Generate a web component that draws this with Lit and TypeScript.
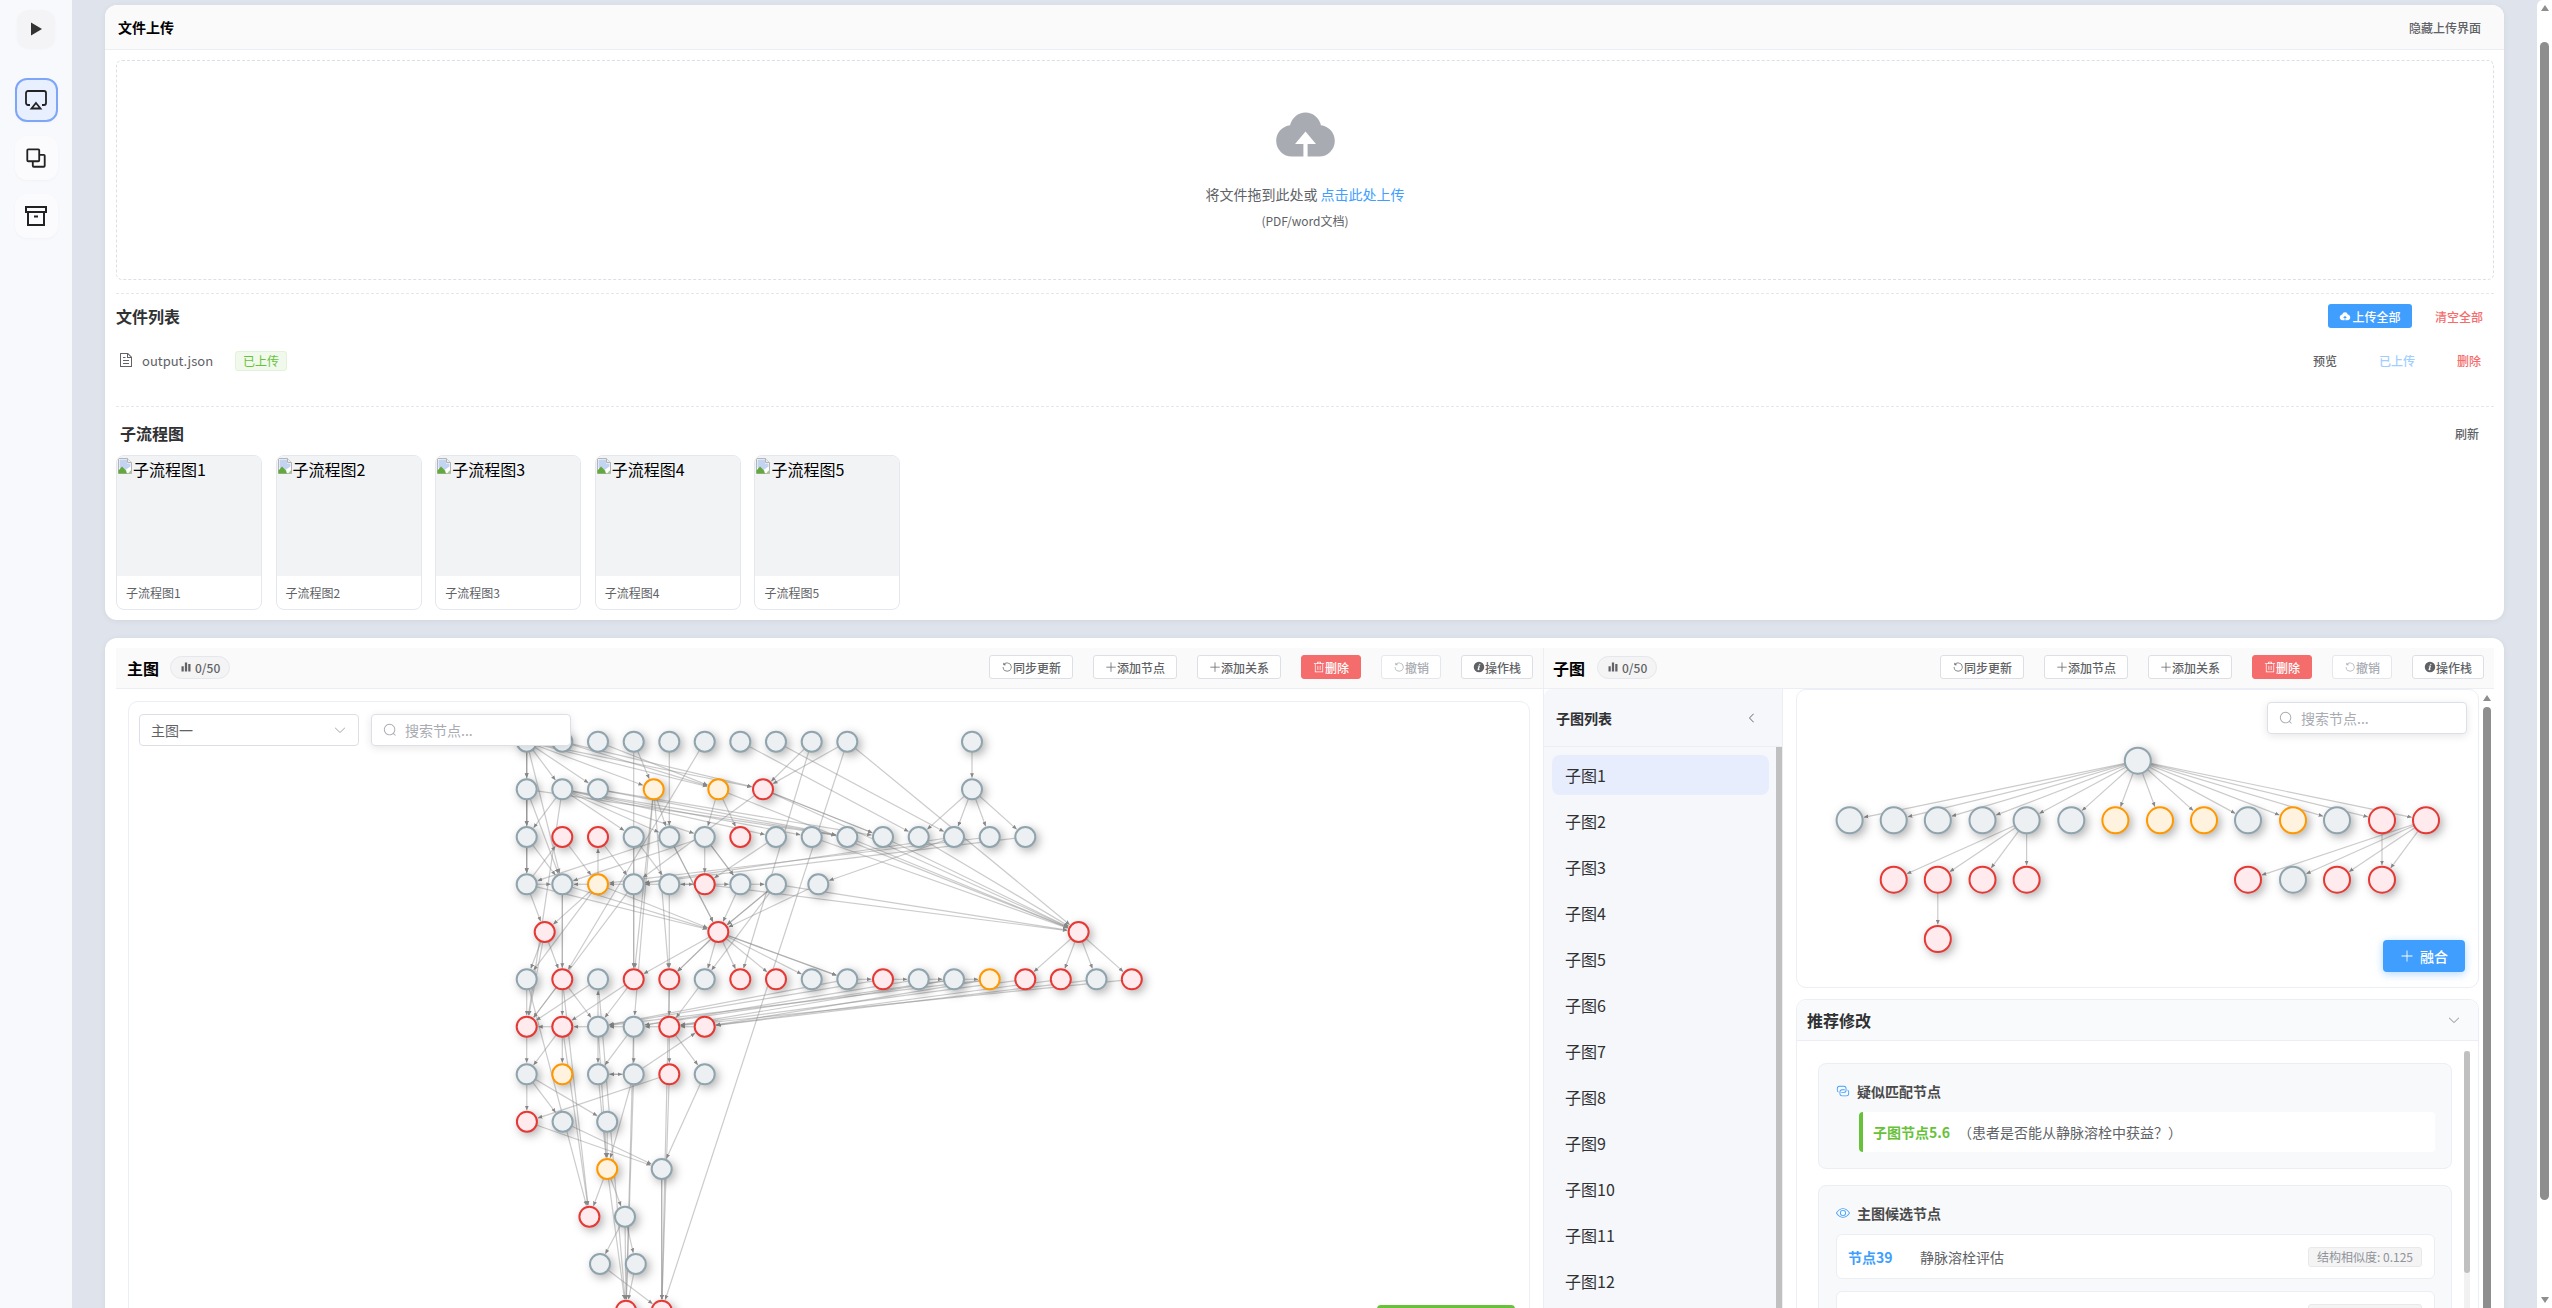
import { LitElement, html, svg, css } from 'lit';
import { customElement } from 'lit/decorators.js';

// element-plus style icon paths (1024 box)
const P = {
  cloud: 'M544 864V672h128L512 480 352 672h128v192H320v-1.6c-5.376.32-10.496 1.6-16 1.6A240 240 0 0 1 64 624c0-123.136 93.12-223.488 212.608-237.248A239.808 239.808 0 0 1 512 192a239.872 239.872 0 0 1 235.456 194.752c119.488 13.76 212.48 114.112 212.48 237.248a240 240 0 0 1-240 240c-5.376 0-10.56-1.28-16-1.6v1.6z',
  refresh: 'M289.088 296.704h92.992a32 32 0 0 1 0 64H232.96a32 32 0 0 1-32-32V179.712a32 32 0 0 1 64 0v50.56a384 384 0 0 1 643.84 282.88 384 384 0 0 1-383.936 384 384 384 0 0 1-384-384h64a320 320 0 1 0 640 0 320 320 0 0 0-555.712-216.448z',
  plus: 'M480 480V128a32 32 0 0 1 64 0v352h352a32 32 0 1 1 0 64H544v352a32 32 0 1 1-64 0V544H128a32 32 0 0 1 0-64z',
  trash: 'M160 256H96a32 32 0 0 1 0-64h256V95.936a32 32 0 0 1 32-32h256a32 32 0 0 1 32 32V192h256a32 32 0 1 1 0 64h-64v672a32 32 0 0 1-32 32H192a32 32 0 0 1-32-32zm448-64v-64H416v64zM224 896h576V256H224zm192-128a32 32 0 0 1-32-32V416a32 32 0 0 1 64 0v320a32 32 0 0 1-32 32m192 0a32 32 0 0 1-32-32V416a32 32 0 0 1 64 0v320a32 32 0 0 1-32 32',
  info: 'M512 64a448 448 0 1 1 0 896.064A448 448 0 0 1 512 64m67.2 275.072c33.28 0 60.288-23.104 60.288-57.344s-27.072-57.344-60.288-57.344c-33.28 0-60.16 23.104-60.16 57.344s26.88 57.344 60.16 57.344M590.912 699.2c0-6.848 2.368-24.64 1.024-34.752l-52.608 60.544c-10.88 11.456-24.512 19.392-30.912 17.28a12.928 12.928 0 0 1-8.256-14.72l87.68-276.992c7.168-35.136-12.544-67.2-54.336-71.296-44.096 0-108.992 44.736-148.48 101.504 0 6.784-1.28 23.68.064 33.792l52.544-60.608c10.88-11.328 23.552-19.328 29.952-17.152a12.8 12.8 0 0 1 7.808 16.128L388.48 728.576c-10.048 30.72 8.96 60.8 55.104 67.968 67.904 0 108.032-43.68 147.392-97.344z',
  search: 'm795.904 750.72 124.992 124.928a32 32 0 0 1-45.248 45.248L750.656 795.904a416 416 0 1 1 45.248-45.248zM480 832a352 352 0 1 0 0-704 352 352 0 0 0 0 704',
  down: 'M831.872 340.864 512 652.672 192.128 340.864a30.592 30.592 0 0 0-42.752 0 29.12 29.12 0 0 0 0 41.6L489.664 714.24a32 32 0 0 0 44.672 0l340.288-331.712a29.12 29.12 0 0 0 0-41.728 30.592 30.592 0 0 0-42.752 0z',
  left: 'M609.408 149.376 277.76 489.6a32 32 0 0 0 0 44.672l331.648 340.352a29.12 29.12 0 0 0 41.728 0 30.592 30.592 0 0 0 0-42.752L339.264 512l311.872-319.872a30.592 30.592 0 0 0 0-42.688 29.12 29.12 0 0 0-41.728 0z',
  eye: 'M512 160c320 0 512 352 512 352S832 864 512 864 0 512 0 512s192-352 512-352m0 64c-225.28 0-384.128 208.064-436.8 288 52.608 79.872 211.456 288 436.8 288 225.28 0 384.128-208.064 436.8-288-52.608-79.872-211.456-288-436.8-288zm0 64a224 224 0 1 1 0 448 224 224 0 0 1 0-448m0 64a160.192 160.192 0 0 0-160 160c0 88.192 71.744 160 160 160s160-71.808 160-160-71.744-160-160-160',
  link: 'M640 384v64H448a128 128 0 0 0-128 128v128a128 128 0 0 0 128 128h320a128 128 0 0 0 128-128V576a128 128 0 0 0-64-110.848V394.88c74.56 26.368 128 97.472 128 181.056v128a192 192 0 0 1-192 192H448a192 192 0 0 1-192-192V576a192 192 0 0 1 192-192z M384 640v-64h192a128 128 0 0 0 128-128V320a128 128 0 0 0-128-128H256a128 128 0 0 0-128 128v128a128 128 0 0 0 64 110.848v70.272A192.064 192.064 0 0 1 64 448V320a192 192 0 0 1 192-192h320a192 192 0 0 1 192 192v128a192 192 0 0 1-192 192z',
  bars: 'M416 896V128h192v768zm-288 0V448h192v448zm576 0V256h192v640z',
  doc: 'M832 384H576V128H192v768h640zm-26.496-64L640 154.496V320zM160 64h480l256 256v608a32 32 0 0 1-32 32H160a32 32 0 0 1-32-32V96a32 32 0 0 1 32-32m160 448h384v64H320zm0-192h160v64H320zm0 384h384v64H320z',
};

const ic = (d: string, cls = '') =>
  html`<svg class="ic ${cls}" viewBox="0 0 1024 1024"><path fill="currentColor" d=${d}></path></svg>`;

type N = { x: number; y: number; c: string };
type G = Record<string, N>;

function row(g: G, name: string, y: number, colors: string, xs: number[]) {
  [...colors].forEach((c, i) => (g[name + i] = { x: xs[i], y, c }));
}

const X = [526.7, 562.3, 598, 633.7, 669.3, 704.7, 740.3, 776, 811.7, 847.3, 883, 918.7, 954, 989.7, 1025.3, 1060.8, 1096.5, 1131.8];

const mainG: G = {};
row(mainG, 'a', 741.7, 'ggggggggggg', [...X.slice(0, 10), 972]);
row(mainG, 'b', 789.3, 'gggoorg', [526.7, 562.3, 598, 653.7, 718.3, 763, 972]);
row(mainG, 'c', 837, 'grrgggrgggggggg', X);
row(mainG, 'd', 884.3, 'ggoggrggg', [...X.slice(0, 8), 818.3]);
row(mainG, 'e', 932, 'rrr', [544.7, 718.3, 1078.6]);
row(mainG, 'f', 979.3, 'grgrrgrrggrggorrgr', X);
row(mainG, 'g', 1026.7, 'rrggrr', X);
row(mainG, 'h', 1074.3, 'goggrg', X);
row(mainG, 'i', 1121.7, 'rgg', [526.9, 562.6, 607.2]);
row(mainG, 'j', 1169, 'og', [607.2, 661.7]);
row(mainG, 'k', 1216.7, 'rg', [589.4, 625]);
row(mainG, 'l', 1264, 'gg', [600, 635.8]);
row(mainG, 'm', 1310.7, 'rr', [626, 661.7]);

const mainE = `a0>b0 a0>b0 a0>b1 a0>b2 a0>b3 a0>b4 a0>b5 a0>c0 a0>d1 a1>b4 a1>b5 a2>b4 a3>b3 a3>f3 a4>c4 a5>f1 a6>c11 a7>c12
a8>b5 a8>f6 a9>b5 a9>m1 a9>e2 a10>b6 b6>c11 b6>c12 b6>c13 b6>c14
b0>c0 b0>c0 b0>c9 b0>d1 b0>d0 b1>c0 b1>c3 b1>c4 b1>c5 b1>c7 b1>c8 b1>c9 b1>g0 b2>c9 b2>c10
b3>c4 b3>f3 b3>f4 b3>g3 b4>c5 b4>c6 b4>e2 b5>c10 b5>c10 b5>d3 b5>e2
c0>d0 c0>d0 c0>d1 c1>d2 d2>c2 c2>d3 c3>d4 c3>f3 c4>e1 c4>e1 c5>d5 c5>d6 c5>d6 c5>d1 c4>d0 c7>d5 c12>d8 c13>d2 c14>d3 c12>d3
c11>e2 c10>e2 c9>e2 c8>e2 d0>c1
d0>d1 d0>e0 d0>e1 d1>e1 d1>g1 d2>e0 d2>e1 d3>d2 d2>d1 d4>d3 d5>d4 d4>d5 d5>d6 d6>d7 d6>e1 d7>e1 d7>e1 d7>f5 d8>e1 d4>f4 d5>e2 d7>e2
e0>f0 e0>f1 e0>g0 e1>f3 e1>f4 e1>f4 e1>f5 e1>f6 e1>f7 e1>f8 e1>f9 e1>f9 e2>f14 e2>f15 e2>f16 e2>f17 d1>f1 d2>f0 d3>g0
f0>g0 f1>g0 f2>g0 f1>g2 g2>f2 f3>g1 f3>g2 f4>g4 f5>g4 f9>f10 f10>f11 f11>f12 f12>f13 f9>g2 f10>g2 f11>g3 f12>g3 f13>g2 f14>g4 f15>g5 f16>g5 f17>g4 f13>g5 f12>g4
g1>g0 g2>g1 g3>g2 g4>g3 g5>g4 g0>h0 g1>h0 g1>h1 g3>h2 g3>h3 g4>h4 g4>h5 h3>g5 g2>h2 g3>m0
h0>i0 h0>i1 h0>i2 h2>h3 h3>h2 h2>j0 h3>j0 g2>j0 h4>i0 h5>j1 i2>j0 i1>j1 i0>j1 h3>m0 f4>m1 h4>m1
f1>k0 f0>k0 g1>k0 j0>k0 j0>k1 j0>m0 k1>l1 k1>m0 k1>l0 l0>m1 l1>m0 j1>m1 j1>m1 f2>m0`;

const subG: G = {};
const sx = [1849.6, 1893.7, 1937.8, 1982.5, 2026.6, 2071.3, 2115.4, 2160, 2204, 2248, 2293, 2337, 2382, 2426];
row(subG, 'a', 760.7, 'g', [2137.8]);
row(subG, 'b', 820.3, 'ggggggooogogrr', sx);
row(subG, 'c', 879.7, 'rrrrrgrr', [sx[1], sx[2], sx[3], sx[4], sx[9], sx[10], sx[11], sx[12]]);
row(subG, 'd', 939, 'r', [sx[2]]);
const subE = `a0>b0 a0>b1 a0>b2 a0>b3 a0>b4 a0>b5 a0>b6 a0>b7 a0>b8 a0>b9 a0>b10 a0>b11 a0>b12 a0>b13
b4>c0 b4>c1 b4>c2 b4>c3 c1>d0 b13>c4 b13>c5 b13>c6 b12>c7 b13>c7`;

function graph(g: G, edgeStr: string, r: number, mark: string, ox: number, oy: number, w: number, h: number) {
  const edges = edgeStr.trim().split(/\s+/).map((e) => e.split('>'));
  return html`<svg class="canvas" width=${w} height=${h} viewBox="${ox} ${oy} ${w} ${h}">
    <defs>
      <marker id=${mark} viewBox="0 0 6 6" refX="6" refY="3" markerWidth="4.5" markerHeight="4.5" markerUnits="userSpaceOnUse" orient="auto">
        <path d="M0 0.4L6 3L0 5.6z" fill="#8a8a8a"></path>
      </marker>
    </defs>
    ${edges.map(([s, t]) => {
      const a = g[s], b = g[t];
      const dx = b.x - a.x, dy = b.y - a.y;
      const len = Math.hypot(dx, dy) || 1;
      const k = (len - r - 1.5) / len;
      return svg`<line class="edge" x1=${a.x} y1=${a.y} x2=${a.x + dx * k} y2=${a.y + dy * k} marker-end="url(#${mark})"></line>`;
    })}
    <g class="nodes">
      ${Object.values(g).map((n) => svg`<circle class="n-${n.c}" cx=${n.x} cy=${n.y} r=${r}></circle>`)}
    </g>
  </svg>`;
}

const brokenImg = html`<svg class="broken" viewBox="0 0 16 16">
  <path d="M1.5 .5h9l4 4v11h-13z" fill="#fff" stroke="#b5b5b5"></path>
  <path d="M10.5 .5v4h4" fill="#eee" stroke="#b5b5b5"></path>
  <path d="M2.5 1.5h7.5v4h3.5v3L7 13 2.5 10z" fill="#c3d3f2"></path>
  <path d="M1.5 15.5v-3l3.5-4 4 4 1 3z" fill="#62a83c"></path>
  <path d="M11 15.5l2.5-3 1 1v2z" fill="#a8c99a"></path>
</svg>`;

const upArrow = html`<svg class="arr" viewBox="0 0 8 8"><path d="M4 1L8 7H0z"></path></svg>`;
const downArrow = html`<svg class="arr" viewBox="0 0 8 8"><path d="M4 7L0 1H8z"></path></svg>`;

const candidates = [
  ['节点39', '静脉溶栓评估', '0.125'],
  ['节点41', '溶栓禁忌评估', '0.118'],
  ['节点12', '卒中发病时间', '0.111'],
  ['节点27', '影像学检查', '0.105'],
  ['节点18', '血管内治疗', '0.100'],
  ['节点33', '抗血小板治疗', '0.095'],
  ['节点6', '病情严重程度', '0.091'],
  ['节点45', '康复评估', '0.087'],
];

@customElement('app-root')
export class AppRoot extends LitElement {
  static styles = css`
    :host {
      display: block;
      background: #dfe3ec;
      font-family: "Noto Sans CJK SC", "Noto Sans", sans-serif;
      color: #303133;
    }
    * { box-sizing: border-box; }
    .ic { width: 12px; height: 12px; flex: none; display: block; }

    .app { display: flex; align-items: stretch; height: 100vh; overflow: hidden; }
    .side {
      flex: 0 0 72px;
      background: #f8f9fd;
      display: flex;
      flex-direction: column;
      align-items: center;
      padding-top: 10px;
      gap: 14px;
    }
    .side button {
      width: 43px;
      height: 44px;
      border: 0;
      border-radius: 12px;
      background: #fbfbfe;
      box-shadow: 0 1px 3px rgba(0, 0, 0, 0.03);
      display: flex;
      align-items: center;
      justify-content: center;
      padding: 0;
      color: #222;
    }
    .side .play { width: 38px; height: 38px; background: #f4f4f6; margin-bottom: 16px; }
    .side .on { background: #e8efff; border: 2px solid #7ea6f8; }
    .side svg { display: block; }

    /* scrollbars are drawn, the headless window hides the real ones */
    .vbar { flex: 0 0 15px; background: #fff; display: flex; flex-direction: column; align-items: center; overflow: hidden; }
    .arr { width: 8px; height: 8px; flex: none; fill: #8e8e8e; }
    .vbar .knob { flex: none; width: 9px; border-radius: 5px; background: #8e8e8e; }
    .win { padding: 4px 0; border-radius: 6px 0 0 0; }
    .win .knob { height: 1158px; margin-top: 30px; }
    .win .arr:last-child { margin-top: auto; }
    .inner { padding-top: 5px; }
    .inner .knob { width: 8px; height: 800px; margin-top: 5px; }

    .main { flex: 1; min-width: 0; overflow: hidden; padding: 5px 33px 4px; display: flex; flex-direction: column; gap: 18px; }
    .card { flex: none; background: #fff; border-radius: 12px; box-shadow: 0 1px 6px rgba(0, 0, 0, 0.06); }

    .up-head {
      height: 45px;
      background: #fafafa;
      border-bottom: 1px solid #ebeef5;
      border-radius: 12px 12px 0 0;
      display: flex;
      align-items: center;
      justify-content: space-between;
      padding: 0 23px 0 13px;
    }
    .up-head b { font-size: 14px; color: #000; }
    .link { font-size: 12px; font-weight: 500; color: #606266; }
    .up-body { padding: 10px 10px 10px 11px; }
    .drop {
      height: 220px;
      border: 1px dashed #dcdfe6;
      border-radius: 6px;
      display: flex;
      flex-direction: column;
      align-items: center;
      padding-top: 39px;
    }
    .drop .ic { width: 67px; height: 67px; color: #a8abb2; }
    .drop p { margin: 7px 0 0; font-size: 14px; line-height: 40px; height: 40px; color: #606266; }
    .drop p span { color: #409eff; }
    .drop small { font-size: 12px; line-height: 16px; color: #606266; margin-top: -1px; }
    .dash { border-top: 1px dashed #e4e7ed; }
    .dash.first { margin-top: 13px; }
    .lhead { display: flex; align-items: center; justify-content: space-between; height: 24px; margin-top: 10px; }
    .h16 { font-size: 16px; font-weight: 700; color: #303133; line-height: 24px; }
    .lhead .acts { display: flex; align-items: center; gap: 23px; padding-right: 11px; }
    .primary {
      height: 24px;
      width: 84px;
      border-radius: 3px;
      background: #409eff;
      color: #fff;
      font-size: 12px;
      font-weight: 500;
      display: flex;
      align-items: center;
      justify-content: center;
      gap: 1px;
    }
    .red { color: #f56c6c; font-size: 12px; font-weight: 500; }
    .frow { display: flex; align-items: center; height: 40px; margin: 12px 0 26px; padding: 0 13px 0 2px; }
    .frow .ic { width: 16px; height: 16px; color: #606266; }
    .frow .nm { font-size: 13px; color: #606266; margin-left: 8px; }
    .tag {
      margin: 1px 0 0 22px;
      font-size: 12px;
      height: 20px;
      line-height: 18px;
      padding: 0 7px;
      border: 1px solid #e1f3d8;
      border-radius: 3px;
      background: #f0f9eb;
      color: #67c23a;
    }
    .frow .acts { margin-left: auto; display: flex; gap: 42px; font-size: 12px; font-weight: 500; color: #606266; }
    .frow .acts i { font-style: normal; color: #a0cfff; }
    .sub-h { display: flex; align-items: center; justify-content: space-between; height: 28px; margin-top: 12px; padding: 0 15px 0 4px; }
    .thumbs { display: flex; gap: 13.6px; margin-top: 8px; }
    .thumb { width: 146px; height: 155px; border: 1px solid #e4e7ed; border-radius: 8px; overflow: hidden; }
    .thumb .im { height: 120px; background: #f2f3f5; display: flex; align-items: flex-start; font-size: 16px; line-height: 24px; color: #000; padding-top: 1px; }
    .broken { width: 16px; height: 16px; flex: none; margin-top: 1px; }
    .thumb .cap { font-size: 12px; line-height: 34px; color: #606266; padding-left: 9px; }

    .work { padding: 10px 10px 0 11px; display: flex; height: 795px; }
    .pane { display: flex; flex-direction: column; min-width: 0; }
    .pane.l { flex: 0 0 1428px; border-right: 1px solid #ebeef5; }
    .pane.r { flex: 1; }
    .bar {
      flex: none;
      height: 41px;
      background: #fafafa;
      border-bottom: 1px solid #ebeef5;
      display: flex;
      align-items: center;
      padding: 0 10px 2px 11px;
    }
    .pane.r .bar { padding-left: 9px; }
    .bar b { font-size: 16px; color: #000; margin-top: 2px; }
    .pill {
      margin-left: 12px;
      height: 23px;
      padding: 0 9px;
      border: 1px solid #e4e7ed;
      border-radius: 12px;
      background: #f4f4f5;
      font-size: 12px;
      font-weight: 500;
      color: #606266;
      display: flex;
      align-items: center;
      gap: 3px;
    }
    .pane.l .pill { margin-left: 11px; }
    .tools { margin-left: auto; display: flex; gap: 20px; }
    .btn {
      height: 24px;
      padding: 0 11px;
      border: 1px solid #dcdfe6;
      border-radius: 3px;
      background: #fff;
      font-size: 12px;
      font-weight: 500;
      color: #606266;
      display: flex;
      align-items: center;
    }
    .btn.del { background: #f56c6c; border-color: #f56c6c; color: #fff; }
    .btn.off { color: #a8abb2; border-color: #e4e7ed; }

    .gwrap { flex: 1; min-height: 0; padding: 12px 13px 12px 12px; }
    .gbox { position: relative; height: 100%; border: 1px solid #ebeef5; border-radius: 10px; overflow: hidden; background: #fff; }
    .canvas { position: absolute; left: 0; top: 0; display: block; }
    .edge { stroke: rgba(140, 140, 140, 0.45); stroke-width: 1.2; }
    .nodes { filter: drop-shadow(3px 3px 5px rgba(0, 0, 0, 0.3)); }
    .nodes circle { stroke-width: 2; }
    .n-g { fill: #ecf0f3; stroke: #90a4ae; }
    .n-r { fill: #ffebee; stroke: #e53935; }
    .n-o { fill: #fff3e0; stroke: #ff9800; }

    .sel {
      position: absolute;
      left: 10px;
      top: 12px;
      width: 220px;
      height: 32px;
      border: 1px solid #dcdfe6;
      border-radius: 4px;
      background: #fff;
      padding: 0 11px;
      display: flex;
      align-items: center;
      justify-content: space-between;
      font-size: 14px;
      color: #606266;
    }
    .sel .ic { color: #a8abb2; width: 14px; height: 14px; }
    .find {
      position: absolute;
      width: 200px;
      height: 32px;
      border: 1px solid #dcdfe6;
      border-radius: 4px;
      background: #fff;
      box-shadow: 0 2px 8px rgba(0, 0, 0, 0.1);
      padding: 0 11px;
      display: flex;
      align-items: center;
      gap: 8px;
      font-size: 14px;
      color: #a8abb2;
    }
    .find .ic { width: 14px; height: 14px; }
    .find.m { left: 242px; top: 12px; }
    .find.s { right: 11px; top: 12px; }
    .go {
      position: absolute;
      right: 13px;
      bottom: 15px;
      height: 32px;
      width: 82px;
      border-radius: 4px;
      background: #409eff;
      color: #fff;
      font-size: 14px;
      font-weight: 500;
      display: flex;
      align-items: center;
      justify-content: center;
      gap: 6px;
      box-shadow: 0 2px 8px rgba(64, 158, 255, 0.4);
    }
    .go .ic { width: 14px; height: 14px; }
    .apply {
      position: absolute;
      right: 14px;
      bottom: 75px;
      width: 138px;
      height: 40px;
      border-radius: 4px;
      background: #67c23a;
      color: #fff;
      font-size: 14px;
      display: flex;
      align-items: center;
      justify-content: center;
    }

    .split { flex: 1; min-height: 0; display: flex; }
    .glist { flex: 0 0 239px; background: #f5f7fb; border-radius: 8px 0 0 0; display: flex; flex-direction: column; min-height: 0; border-right: 1px solid #ebeef5; }
    .glist header {
      flex: none;
      height: 58px;
      border-bottom: 1px solid #ebeef5;
      display: flex;
      align-items: center;
      justify-content: space-between;
      padding: 0 24px 0 12px;
      font-size: 14px;
      font-weight: 700;
    }
    .glist header .ic { color: #606266; }
    .gbody { flex: 1; min-height: 0; display: flex; }
    .items { flex: 1; min-width: 0; overflow: hidden; padding: 8px 0 8px 8px; display: flex; flex-direction: column; gap: 6px; }
    .items div { flex: none; height: 40px; line-height: 40px; padding-left: 13px; margin-right: 7px; border-radius: 8px; font-size: 16px; }
    .items .on { background: #e8edfd; }
    .thin { flex: 0 0 6px; background: #c0c0c0; }

    .scroller { flex: 1; min-width: 0; margin-left: 13px; display: flex; }
    .sbody { flex: 1; min-width: 0; overflow: hidden; }
    .sbox { position: relative; height: 299px; border: 1px solid #ebeef5; border-radius: 10px; background: #fff; overflow: hidden; }
    .rec { margin-top: 11px; border: 1px solid #ebeef5; border-radius: 10px; background: #fff; }
    .rec > header {
      height: 41px;
      background: #f9fafb;
      border-bottom: 1px solid #ebeef5;
      border-radius: 10px 10px 0 0;
      display: flex;
      align-items: center;
      justify-content: space-between;
      padding: 0 17px 0 10px;
      font-size: 16px;
      font-weight: 700;
    }
    .rec > header .ic { width: 14px; height: 14px; color: #909399; }
    .recb { height: 400px; margin: 10px 8px 0 0; display: flex; }
    .recc { flex: 1; min-width: 0; overflow: hidden; padding: 12px 12px 12px 21px; }
    .rtrack { flex: 0 0 6px; background: #f1f1f1; }
    .rtrack div { height: 222px; background: #c0c0c0; border-radius: 3px; }
    .sect { background: #f8f9fb; border: 1px solid #ebeef5; border-radius: 8px; padding: 16px 16px 16px 17px; }
    .sect + .sect { margin-top: 16px; }
    .sect h4 { margin: 0 0 10px; display: flex; align-items: center; gap: 7px; font-size: 14px; line-height: 22px; color: #4a4a4a; }
    .sect h4 .ic { width: 14px; height: 14px; color: #409eff; }
    .susp { height: 40px; margin-left: 23px; border-left: 4px solid #67c23a; border-radius: 4px; background: #fff; display: flex; align-items: center; padding-left: 10px; font-size: 14px; color: #606266; }
    .susp b { color: #67c23a; margin-right: 8px; }
    .cand { height: 45px; background: #fff; border: 1px solid #ebeef5; border-radius: 6px; display: flex; align-items: center; padding: 0 12px 0 11px; font-size: 14px; color: #606266; margin-bottom: 12px; }
    .cand:last-child { margin-bottom: 0; }
    .cand b { color: #409eff; width: 72px; }
    .cand em { margin-left: auto; font-style: normal; font-size: 12px; height: 20px; line-height: 18px; padding: 0 8px; background: #f4f4f5; border: 1px solid #e9e9eb; border-radius: 3px; color: #909399; }
  `;

  tools() {
    return html`<div class="tools">
      <div class="btn">${ic(P.refresh)}同步更新</div>
      <div class="btn">${ic(P.plus)}添加节点</div>
      <div class="btn">${ic(P.plus)}添加关系</div>
      <div class="btn del">${ic(P.trash)}删除</div>
      <div class="btn off">${ic(P.refresh)}撤销</div>
      <div class="btn">${ic(P.info)}操作栈</div>
    </div>`;
  }

  findBox(cls: string) {
    return html`<div class="find ${cls}">${ic(P.search)}<span>搜索节点...</span></div>`;
  }

  render() {
    const subs = Array.from({ length: 20 }, (_, i) => `子图${i + 1}`);
    return html`<div class="app">
      <nav class="side">
        <button class="play"><svg width="14" height="14" viewBox="0 0 14 14"><path d="M2 0.5L13 7 2 13.5z" fill="#333"></path></svg></button>
        <button class="on"><svg width="22" height="20" viewBox="0 0 22 20" fill="none" stroke="#222" stroke-width="1.8"><path d="M5 15H3a2 2 0 0 1-2-2V3a2 2 0 0 1 2-2h16a2 2 0 0 1 2 2v10a2 2 0 0 1-2 2h-2"></path><path d="M11 13l4.5 5.5h-9z"></path></svg></button>
        <button><svg width="22" height="22" viewBox="0 0 24 24" fill="none" stroke="#222" stroke-width="2"><rect x="2.5" y="2.5" width="13" height="13" rx="1"></rect><path d="M15.5 8.5h5a1 1 0 0 1 1 1v11a1 1 0 0 1-1 1h-11a1 1 0 0 1-1-1v-5"></path></svg></button>
        <button><svg width="24" height="24" viewBox="0 0 24 24" fill="none" stroke="#222" stroke-width="2"><rect x="2" y="3" width="20" height="5"></rect><path d="M4 8v13h16V8"></path><path d="M10 12.5h4"></path></svg></button>
      </nav>
      <div class="main">
        <section class="card">
          <div class="up-head"><b>文件上传</b><span class="link">隐藏上传界面</span></div>
          <div class="up-body">
            <div class="drop">
              ${ic(P.cloud)}
              <p>将文件拖到此处或 <span>点击此处上传</span></p>
              <small>(PDF/word文档)</small>
            </div>
            <div class="dash first"></div>
            <div class="lhead">
              <span class="h16">文件列表</span>
              <div class="acts">
                <div class="primary">${ic(P.cloud)}上传全部</div>
                <span class="red">清空全部</span>
              </div>
            </div>
            <div class="frow">
              ${ic(P.doc)}<span class="nm">output.json</span><span class="tag">已上传</span>
              <div class="acts"><span>预览</span><i>已上传</i><span class="red">删除</span></div>
            </div>
            <div class="dash"></div>
            <div class="sub-h"><span class="h16">子流程图</span><span class="link">刷新</span></div>
            <div class="thumbs">
              ${[1, 2, 3, 4, 5].map((n) => html`<div class="thumb">
                <div class="im">${brokenImg}<span>子流程图${n}</span></div>
                <div class="cap">子流程图${n}</div>
              </div>`)}
            </div>
          </div>
        </section>
        <section class="card work">
          <div class="pane l">
            <div class="bar"><b>主图</b><div class="pill">${ic(P.bars)}0/50</div>${this.tools()}</div>
            <div class="gwrap">
              <div class="gbox">
                ${graph(mainG, mainE, 10, 'mm', 129, 702, 1400, 720)}
                <div class="sel"><span>主图一</span>${ic(P.down)}</div>
                ${this.findBox('m')}
                <div class="apply">确认修改</div>
              </div>
            </div>
          </div>
          <div class="pane r">
            <div class="bar"><b>子图</b><div class="pill">${ic(P.bars)}0/50</div>${this.tools()}</div>
            <div class="split">
              <aside class="glist">
                <header><span>子图列表</span>${ic(P.left)}</header>
                <div class="gbody">
                  <div class="items">
                    ${subs.map((s, i) => html`<div class=${i === 0 ? 'on' : ''}>${s}</div>`)}
                  </div>
                  <div class="thin"></div>
                </div>
              </aside>
              <div class="scroller">
                <div class="sbody">
                  <div class="sbox">
                    ${graph(subG, subE, 13, 'ms', 1797, 690, 682, 297)}
                    ${this.findBox('s')}
                    <div class="go">${ic(P.plus)}融合</div>
                  </div>
                  <div class="rec">
                    <header><span>推荐修改</span>${ic(P.down)}</header>
                    <div class="recb">
                      <div class="recc">
                        <div class="sect">
                          <h4>${ic(P.link)}疑似匹配节点</h4>
                          <div class="susp"><b>子图节点5.6</b>（患者是否能从静脉溶栓中获益？）</div>
                        </div>
                        <div class="sect">
                          <h4>${ic(P.eye)}主图候选节点</h4>
                          ${candidates.map(([id, name, v]) => html`<div class="cand"><b>${id}</b><span>${name}</span><em>结构相似度: ${v}</em></div>`)}
                        </div>
                      </div>
                      <div class="rtrack"><div></div></div>
                    </div>
                  </div>
                </div>
                <div class="vbar inner">${upArrow}<div class="knob"></div></div>
              </div>
            </div>
          </div>
        </section>
      </div>
      <div class="vbar win">${upArrow}<div class="knob"></div>${downArrow}</div>
    </div>`;
  }
}
